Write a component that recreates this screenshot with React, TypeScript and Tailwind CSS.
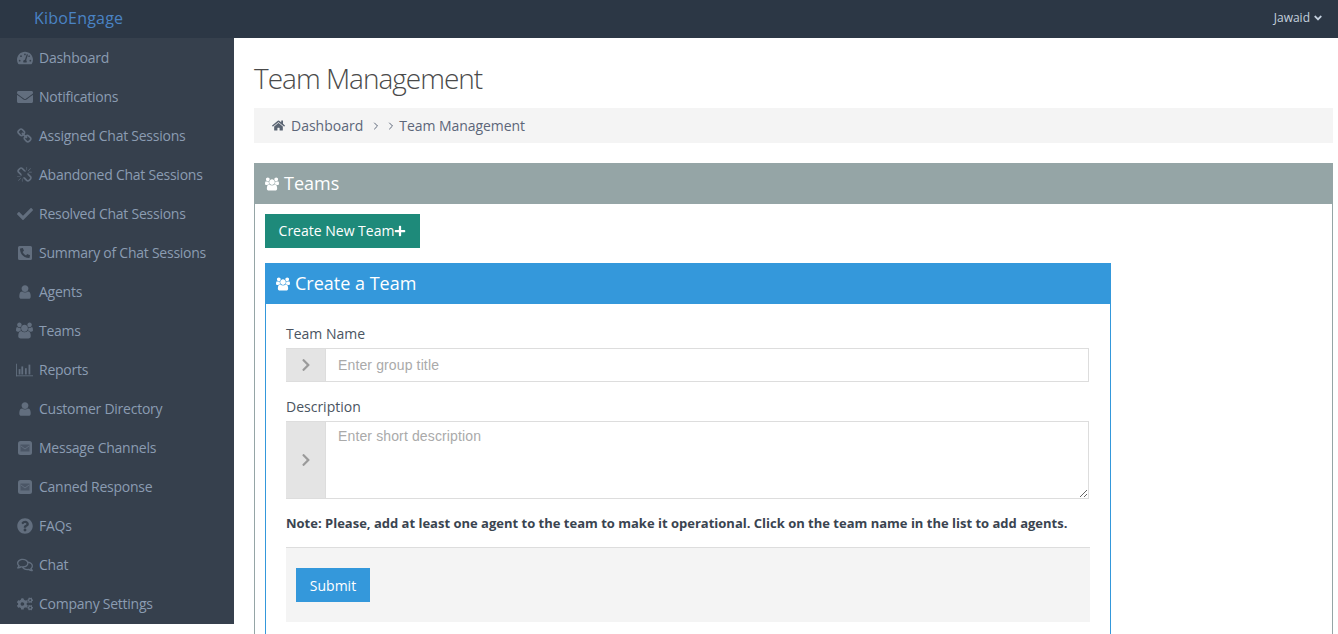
import type { ComponentType } from "react";
import { ChevronRight } from "lucide-react";
import {
  FaTachometerAlt,
  FaEnvelope,
  FaCheck,
  FaPhoneSquareAlt,
  FaQuestionCircle,
  FaRegComments,
  FaCogs,
  FaHome,
  FaAngleDown,
  FaChevronRight,
  FaPlus,
} from "react-icons/fa";

const usersPath =
  "M593 896q-162 5-265 128h-134q-82 0-138-40.5t-56-118.5q0-353 124-353 6 0 43.5 21t97.5 42.5 119 21.5q67 0 133-23-5 37-5 66 0 139 81 256zm1071 637q0 120-73 189.5t-194 69.5h-874q-121 0-194-69.5t-73-189.5q0-53 3.5-103.5t14-109 26.5-108.5 43-97.5 62-81 85.5-53.5 111.5-20q10 0 43 21.5t73 48 107 48 135 21.5 135-21.5 107-48 73-48 43-21.5q61 0 111.5 20t85.5 53.5 62 81 43 97.5 26.5 108.5 14 109 3.5 103.5zm-1024-1277q0 106-75 181t-181 75-181-75-75-181 75-181 181-75 181 75 75 181zm704 384q0 159-112.5 271.5t-271.5 112.5-271.5-112.5-112.5-271.5 112.5-271.5 271.5-112.5 271.5 112.5 112.5 271.5zm576 225q0 78-56 118.5t-138 40.5h-134q-103-123-265-128 81-117 81-256 0-29-5-66 66 23 133 23 59 0 119-21.5t97.5-42.5 43.5-21q124 0 124 353zm-128-609q0 106-75 181t-181 75-181-75-75-181 75-181 181-75 181 75 75 181z";

function UsersIcon({ className }: { className?: string }) {
  return (
    <svg viewBox="0 0 1920 1792" fill="currentColor" className={className}>
      <path d={usersPath} />
    </svg>
  );
}

function SideUsers() {
  return <UsersIcon className="w-[18px] h-[17px]" />;
}

function SideUser() {
  return (
    <svg viewBox="0 0 1792 1792" fill="currentColor" className="w-[16px] h-[16px]">
      <path d="M1536 1399q0 109-62.5 187t-150.5 78h-854q-88 0-150.5-78t-62.5-187q0-85 8.5-160.5t31.5-152 58.5-131 94-89 134.5-34.5q131 128 313 128t313-128q76 0 134.5 34.5t94 89 58.5 131 31.5 152 8.5 160.5zm-256-887q0 159-112.5 271.5t-271.5 112.5-271.5-112.5-112.5-271.5 112.5-271.5 271.5-112.5 271.5 112.5 112.5 271.5z" />
    </svg>
  );
}

function SideChart() {
  return (
    <svg viewBox="0 0 19 14" fill="currentColor" className="w-[19px] h-[14px]">
      <rect x="0" y="0" width="1" height="14" />
      <rect x="0" y="13" width="19" height="1" />
      <rect x="3" y="6" width="2" height="6" />
      <rect x="6" y="3" width="2" height="9" />
      <rect x="10" y="5" width="2" height="7" />
      <rect x="14" y="1" width="2" height="11" />
    </svg>
  );
}

function SideLink() {
  return (
    <svg viewBox="0 0 1792 1792" fill="currentColor" className="w-[16px] h-[16px]">
      <path d="M1456 1216q0-40-28-68l-208-208q-28-28-68-28-42 0-72 32 3 3 19 18.5t21.5 21.5 15 19 13 25.5 3.5 27.5q0 40-28 68t-68 28q-15 0-27.5-3.5t-25.5-13-19-15-21.5-21.5-18.5-19q-33 31-33 73 0 40 28 68l206 207q27 27 68 27 40 0 68-26l147-146q28-28 28-67zm-703-705q0-40-28-68l-206-207q-28-28-68-28-39 0-68 27l-147 146q-28 28-28 67 0 40 28 68l208 208q27 27 68 27 42 0 72-31-3-3-19-18.5t-21.5-21.5-15-19-13-25.5-3.5-27.5q0-40 28-68t68-28q15 0 27.5 3.5t25.5 13 19 15 21.5 21.5 18.5 19q33-31 33-73zm895 705q0 120-85 203l-147 146q-83 83-203 83-121 0-204-85l-206-207q-83-83-83-203 0-123 88-209l-88-88q-86 88-208 88-120 0-204-84l-208-208q-84-84-84-204t85-203l147-146q83-83 203-83 121 0 204 85l206 207q83 83 83 203 0 123-88 209l88 88q86-88 208-88 120 0 204 84l208 208q84 84 84 204z" />
    </svg>
  );
}

function SideUnlink() {
  return (
    <svg viewBox="0 0 1664 1792" fill="currentColor" className="w-[15px] h-[16px]">
      <path d="M439 1271l-256 256q-11 9-23 9t-23-9q-9-10-9-23t9-23l256-256q10-9 23-9t23 9q9 10 9 23t-9 23zm169 41v320q0 14-9 23t-23 9-23-9-9-23v-320q0-14 9-23t23-9 23 9 9 23zm-224-224q0 14-9 23t-23 9h-320q-14 0-23-9t-9-23 9-23 23-9h320q14 0 23 9t9 23zm1264 128q0 120-85 203l-147 146q-83 83-203 83-121 0-204-85l-334-335q-21-21-42-56l239-18 273 274q27 27 68 27.5t68-26.5l147-146q28-28 28-67 0-40-28-68l-274-275 18-239q35 21 56 42l336 336q84 86 84 204zm-617-724l-239 18-273-274q-28-28-68-28-39 0-68 27l-147 146q-28 28-28 67 0 40 28 68l274 274-18 240q-35-21-56-42l-336-336q-84-86-84-204 0-120 85-203l147-146q83-83 203-83 121 0 204 85l334 335q21 21 42 56zm633 84q0 14-9 23t-23 9h-320q-14 0-23-9t-9-23 9-23 23-9h320q14 0 23 9t9 23zm-544-544v320q0 14-9 23t-23 9-23-9-9-23v-320q0-14 9-23t23-9 23 9 9 23zm407 151l-256 256q-11 9-23 9t-23-9q-9-10-9-23t9-23l256-256q10-9 23-9t23 9q9 10 9 23t-9 23z" />
    </svg>
  );
}

function SideMail() {
  return (
    <svg viewBox="0 0 14 14" className="w-[14px] h-[14px]">
      <rect width="14" height="14" rx="2.5" fill="currentColor" />
      <rect x="2.5" y="3.5" width="9" height="7" fill="#4b5666" />
      <path d="M3 5l4 3 4-3" fill="none" stroke="currentColor" strokeWidth="1" />
    </svg>
  );
}

const menu: { label: string; icon: ComponentType<{ className?: string }> }[] = [
  { label: "Dashboard", icon: FaTachometerAlt },
  { label: "Notifications", icon: FaEnvelope },
  { label: "Assigned Chat Sessions", icon: SideLink },
  { label: "Abandoned Chat Sessions", icon: SideUnlink },
  { label: "Resolved Chat Sessions", icon: FaCheck },
  { label: "Summary of Chat Sessions", icon: FaPhoneSquareAlt },
  { label: "Agents", icon: SideUser },
  { label: "Teams", icon: SideUsers },
  { label: "Reports", icon: SideChart },
  { label: "Customer Directory", icon: SideUser },
  { label: "Message Channels", icon: SideMail },
  { label: "Canned Response", icon: SideMail },
  { label: "FAQs", icon: FaQuestionCircle },
  { label: "Chat", icon: FaRegComments },
  { label: "Company Settings", icon: FaCogs },
];

export default function App() {
  return (
    <div className="h-screen overflow-hidden bg-white font-['Open_Sans',sans-serif] text-[14px] text-[#3f4a57]">
      {/* Top bar */}
      <header className="h-[38px] bg-[#2c3745] flex items-center justify-between pl-[34px] pr-[14px]">
        <span className="text-[16px] tracking-[0.2px] text-[#4a83c4] -translate-y-px">KiboEngage</span>
        <span className="flex items-center gap-[2px] text-[12px] text-[#c4d0de] -translate-y-px">
          Jawaid
          <FaAngleDown className="text-[12px]" />
        </span>
      </header>

      <div className="flex items-start">
        {/* Sidebar */}
        <aside className="w-[234px] shrink-0 bg-[#36404d] pb-px">
          {menu.map((item) => (
            <div key={item.label} className="h-[39px] flex items-center pl-[16px] text-[#8b9cb2]">
              <span className="w-[17px] flex justify-center text-[#626e7e] text-[16px]">
                <item.icon />
              </span>
              <span className="ml-[6px] whitespace-nowrap tracking-[-0.25px]">{item.label}</span>
            </div>
          ))}
        </aside>

        {/* Content */}
        <main className="flex-1 min-w-0 pl-[20px] pr-[5px]">
          <h1 className="h-[70px] pt-[19px] text-[28px] leading-[42px] font-light text-[#4a4a4a] tracking-[-1px]">
            Team Management
          </h1>

          <nav className="h-[35px] bg-[#f4f4f4] flex items-center pl-[18px] text-[#5c6679]">
            <FaHome className="text-[#5a6472] text-[13px]" />
            <span className="ml-[6px]">Dashboard</span>
            <ChevronRight size={12} strokeWidth={2} className="ml-[7px]" />
            <ChevronRight size={12} strokeWidth={2} className="ml-[3px]" />
            <span className="ml-[2px] -tracking-[0.05px]">Team Management</span>
          </nav>

          {/* Teams panel */}
          <section className="mt-[20px] border border-[#95a5a6] border-b-0">
            <div className="h-[40px] -mx-px px-[11px] bg-[#95a5a6] text-white text-[18px] flex items-center gap-[5px]">
              <UsersIcon className="w-[14px] h-[14px]" />
              <span className="-translate-y-px">Teams</span>
            </div>

            <div className="px-[10px] pt-[10px] pb-[40px]">
              <button className="h-[34px] w-[155px] bg-[#1e8a7a] text-white flex items-center justify-center">
                <span className="-translate-y-px">Create New Team</span>
                <FaPlus className="text-[12px]" />
              </button>

              {/* Create a team */}
              <div className="mt-[15px] w-[846px] border border-[#3498db] pb-[30px]">
                <div className="h-[40px] -mx-px px-[11px] bg-[#3498db] text-white text-[18px] flex items-center gap-[5px]">
                  <UsersIcon className="w-[14px] h-[14px]" />
                  <span className="-translate-y-px">Create a Team</span>
                </div>

                <div className="pt-[20px] pl-[20px] pr-[20px]">
                  <label className="block h-[24px] leading-[20px] text-[#4a5461]">Team Name</label>
                  <div className="flex h-[34px] w-[803px] border border-[#ddd] border-l-0">
                    <span className="w-[39px] bg-[#e4e4e4] flex items-center justify-center text-[#9a9a9a] text-[14px]">
                      <FaChevronRight />
                    </span>
                    <input
                      placeholder="Enter group title"
                      className="flex-1 border-l border-[#ddd] px-[12px] font-['Liberation_Sans',sans-serif] text-[14px] tracking-[0.13px] outline-none placeholder:text-[#aaaaaa]"
                    />
                  </div>

                  <label className="block mt-[15px] h-[24px] leading-[20px] text-[#4a5461]">Description</label>
                  <div className="flex h-[78px] w-[803px] border border-[#ddd] border-l-0">
                    <span className="w-[39px] bg-[#e4e4e4] flex items-center justify-center text-[#9a9a9a] text-[14px]">
                      <FaChevronRight />
                    </span>
                    <textarea
                      placeholder="Enter short description"
                      className="flex-1 border-l border-[#ddd] px-[12px] py-[4px] font-['Liberation_Sans',sans-serif] text-[14px] tracking-[0.13px] outline-none placeholder:text-[#aaaaaa]"
                    />
                  </div>

                  <p className="mt-[15px] h-[18px] text-[13px] leading-[18px] font-bold text-[#3a4450]">
                    Note: Please, add at least one agent to the team to make it operational. Click on the team name in the list to add agents.
                  </p>

                  <div className="mt-[15px] h-[75px] w-[804px] bg-[#f4f4f4] border-t border-[#ddd] pt-[20px] pl-[10px]">
                    <button className="h-[34px] w-[74px] bg-[#3498db] text-white">Submit</button>
                  </div>
                </div>
              </div>
            </div>
          </section>
        </main>
      </div>
    </div>
  );
}
